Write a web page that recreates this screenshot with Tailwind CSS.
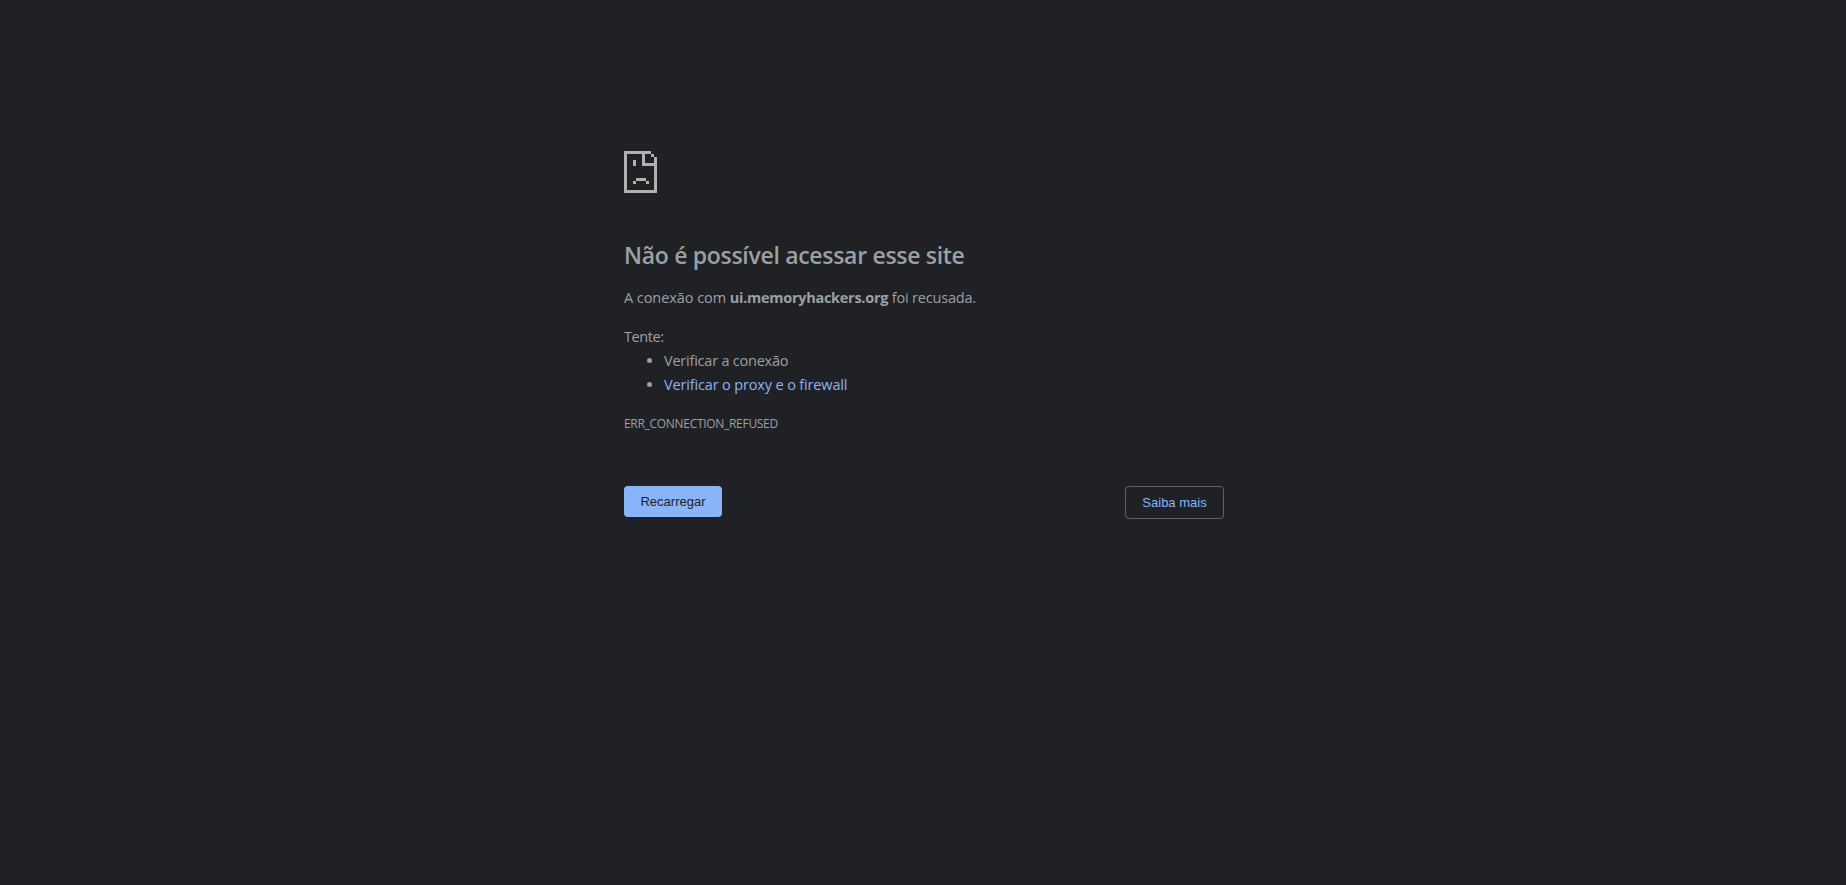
<!DOCTYPE html>
<html lang="pt-BR">
<head>
  <meta charset="UTF-8" />
  <meta name="viewport" content="width=device-width, initial-scale=1.0" />
  <title>ui.memoryhackers.org</title>
  <script src="https://cdn.jsdelivr.net/npm/@tailwindcss/browser@4"></script>
</head>
<body class="bg-[#202124] text-[#9aa0a6] min-h-screen font-['Open_Sans',sans-serif]">
  <main class="w-[600px] ml-[624px] pt-[151px]">
    <!-- sad page icon -->
    <svg class="block w-[33px] h-[42px]" viewBox="0 0 33 42" fill="#b0b0b0" shape-rendering="crispEdges">
      <path d="M0 0h27v3H21v9h12v30H0zM3 3v36h27V15H18V3zM27 3h3v3h-3zM30 6h3v6h-3zM9 9h3v6H9zM12 27h10v3H12zM9 30h3v3H9zM22 30h3v3h-3z" fill-rule="evenodd" />
    </svg>

    <h1 class="mt-[46px] text-[23px] leading-8 font-semibold tracking-[-0.3px] whitespace-nowrap">Não é possível acessar esse site</h1>

    <p class="mt-[15px] text-[14.5px] leading-6 whitespace-nowrap tracking-[-0.06px]">A conexão com <strong class="font-bold tracking-[-0.28px]">ui.memoryhackers.org</strong> <span class="tracking-[-0.2px]">foi recusada.</span></p>

    <p class="mt-[15px] text-[14.5px] leading-6 tracking-[-0.4px]">Tente:</p>
    <ul class="list-disc pl-10 text-[14.5px] leading-6">
      <li class="tracking-[-0.22px]">Verificar a conexão</li>
      <li class="tracking-[-0.15px]"><a href="#" class="text-[#8ab4f8]">Verificar o proxy e o firewall</a></li>
    </ul>

    <p class="mt-[15px] text-xs leading-6 tracking-[-0.3px]">ERR_CONNECTION_REFUSED</p>

    <!-- buttons -->
    <div class="mt-[50px] flex justify-between items-start text-[13px] font-['Liberation_Sans',sans-serif]">
      <button class="w-[98px] h-[31px] rounded bg-[#8ab4f8] text-[#202124]">Recarregar</button>
      <button class="w-[99px] h-[33px] rounded border border-[#5f6368] text-[#8ab4f8]">Saiba mais</button>
    </div>
  </main>
</body>
</html>
